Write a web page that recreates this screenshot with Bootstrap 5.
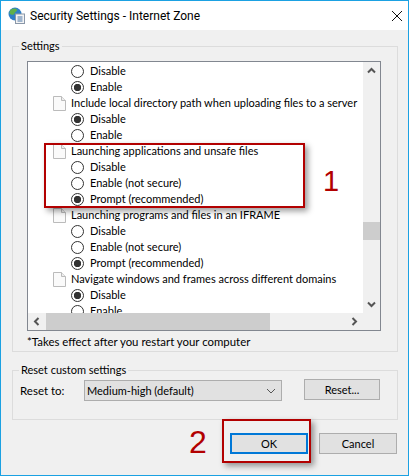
<!DOCTYPE html>
<html lang="en">

<head>
    <meta charset="UTF-8">
    <title>Security Settings - Internet Zone</title>
    <meta name="viewport" content="width=device-width, initial-scale=1">
    <link href="https://cdn.jsdelivr.net/npm/bootstrap@5.3.0/dist/css/bootstrap.min.css" rel="stylesheet">
    <style>
        html, body { height: 100%; }
        body { background: #f0f0f0; color: #000; font: 11px/16px Lato, sans-serif; overflow: hidden; }
        .win { position: relative; width: 409px; height: 476px; border: 1px solid #1ba1e2; background: #f0f0f0; }
        .win-title { height: 29px; background: #fff; padding-left: 7px; gap: 5px; font: 12px/16px Roboto, sans-serif; }
        .win-x { margin-left: auto; margin-right: 5px; }
        .group { border: 1px solid #dcdcdc; margin: 0 10px 0 11px; padding: 0 16px 0 14px; }
        .group legend { float: none; width: auto; font-size: 11px; line-height: 16px; margin: 0 0 0 -8px; padding: 0 2px; }
        .group-settings { margin-top: 8px; height: 314px; }
        .group-reset { margin-top: 10px; height: 58px; padding: 0 7px; }
        .group-reset legend { margin-left: -1px; }
        .list-frame { height: 270px; margin-top: 7px; border: 1px solid #828790; background: #fff; }
        .list-top { height: 251px; }
        .list-view { flex: 1; overflow: hidden; padding-top: 1px; }
        .tree-row { height: 16px; white-space: nowrap; }
        .tree-opt { padding-left: 43px; gap: 6px; }
        .tree-head { padding-left: 25px; gap: 5px; }
        .tree-row .form-check-input { width: 13px; height: 13px; margin: 0; flex: none; border: 1px solid #333; background-color: #fff; background-image: none; }
        .tree-row .form-check-input:checked { background-image: radial-gradient(circle, #333 3.4px, #fff 4px); border-color: #333; }
        .vbar { width: 17px; background: #f0f0f0; }
        .vthumb { height: 18px; background: #cdcdcd; margin-top: 143px; }
        .bar-arrow { height: 17px; width: 17px; flex: none; }
        .hbar { height: 17px; background: #f0f0f0; }
        .hthumb { width: 224px; background: #cdcdcd; margin-left: 1px; }
        .note { margin: 3px 0 0; font-size: 11.4px; }
        .reset-row { padding-top: 2px; }
        .reset-to { width: 64px; font-size: 11.5px; }
        .win-select { width: 198px; height: 21px; flex: none; background-color: #e1e1e1; border: 1px solid #adadad; border-radius: 0; padding: 0 20px 0 2px; font-size: 11px; line-height: 16px; background-image: url("data:image/svg+xml,%3csvg xmlns='http://www.w3.org/2000/svg' viewBox='0 0 10 6'%3e%3cpath d='M1 1l4 4 4-4' fill='none' stroke='%23555'/%3e%3c/svg%3e"); background-position: right 5px center; background-size: 10px 6px; color: #000; }
        .win-btn { background: #e1e1e1; border: 1px solid #adadad; border-radius: 0; color: #000; font-size: 11px; line-height: 16px; padding: 0; height: 21px; }
        .win-btn-reset { width: 76px; margin: -2px 0 0 22px; }
        .win-btn-ok { width: 78px; border: 2px solid #0078d7; }
        .win-btn-cancel { width: 78px; }
        .footer-row { padding: 13px 11px 0 0; gap: 11px; }
        .mark-box { position: absolute; border: 2px solid #b20000; box-shadow: 3px 3px 6px rgba(0, 0, 0, .4); pointer-events: none; }
        .mark-one { left: 43px; top: 142px; width: 261px; height: 65px; }
        .mark-two { left: 221px; top: 418px; width: 89px; height: 44px; }
        .mark-num { position: absolute; color: #b20000; font-family: "Liberation Sans", sans-serif; }
        .num-one { left: 322px; top: 164px; font-size: 29px; line-height: 32px; }
        .num-two { left: 188px; top: 425px; font-size: 32px; line-height: 32px; }
    </style>
</head>

<body>
    <div class="win d-flex flex-column">
        <div class="win-title d-flex align-items-center">
            <svg width="17" height="17" viewBox="0 0 17 17">
                <circle cx="7" cy="7" r="6.5" fill="#2f7fc8"/>
                <path d="M3 2.500c2-1.500 5-1.500 6 0 .5 2-2 2-2.500 4S3 8 1.500 6.500C1.500 5 2 3.500 3 2.500z" fill="#5fb04a"/>
                <rect x="7.500" y="7" width="9" height="9.500" fill="#f4f4f4" stroke="#8a97a8"/>
                <path d="M9.500 10h5M9.500 12h5M9.500 14h5" stroke="#4a76a8"/>
            </svg>
            <span>Security Settings - Internet Zone</span>
            <svg class="win-x" width="12" height="12" viewBox="0 0 12 12"><path d="M1 1l10 10M11 1L1 11" stroke="#111" fill="none"/></svg>
        </div>

        <fieldset class="group group-settings">
            <legend>Settings</legend>
            <div class="list-frame">
                <div class="list-top d-flex">
                    <div class="list-view" id="tree"></div>
                    <div class="vbar d-flex flex-column">
                        <div class="bar-arrow d-flex align-items-center justify-content-center">
                            <svg width="9" height="7" viewBox="0 0 9 7"><path d="M1 5.500l3.500-3.500 3.500 3.500" stroke="#555" stroke-width="2" fill="none"/></svg>
                        </div>
                        <div class="flex-grow-1"><div class="vthumb"></div></div>
                        <div class="bar-arrow d-flex align-items-center justify-content-center">
                            <svg width="9" height="7" viewBox="0 0 9 7"><path d="M1 1.500l3.500 3.500 3.500-3.500" stroke="#555" stroke-width="2" fill="none"/></svg>
                        </div>
                    </div>
                </div>
                <div class="hbar d-flex">
                    <div class="bar-arrow d-flex align-items-center justify-content-center">
                        <svg width="7" height="9" viewBox="0 0 7 9"><path d="M5.500 1L2 4.500 5.500 8" stroke="#555" stroke-width="2" fill="none"/></svg>
                    </div>
                    <div class="hthumb"></div>
                    <div class="flex-grow-1"></div>
                    <div class="bar-arrow d-flex align-items-center justify-content-center">
                        <svg width="7" height="9" viewBox="0 0 7 9"><path d="M1.500 1L5 4.500 1.500 8" stroke="#555" stroke-width="2" fill="none"/></svg>
                    </div>
                    <div class="bar-arrow"></div>
                </div>
            </div>
            <p class="note">*Takes effect after you restart your computer</p>
        </fieldset>

        <fieldset class="group group-reset">
            <legend>Reset custom settings</legend>
            <div class="reset-row d-flex align-items-center">
                <span class="reset-to">Reset to:</span>
                <select class="form-select win-select">
                    <option>Medium-high (default)</option>
                </select>
                <button class="btn win-btn win-btn-reset">Reset...</button>
            </div>
        </fieldset>

        <div class="footer-row d-flex justify-content-end">
            <button class="btn win-btn win-btn-ok">OK</button>
            <button class="btn win-btn win-btn-cancel">Cancel</button>
        </div>

        <div class="mark-box mark-one"></div>
        <div class="mark-box mark-two"></div>
        <div class="mark-num num-one">1</div>
        <div class="mark-num num-two">2</div>
    </div>

    <script>
        const rows = [
            ['o', 'Disable'], ['x', 'Enable'],
            ['h', 'Include local directory path when uploading files to a server'],
            ['x', 'Disable'], ['o', 'Enable'],
            ['h', 'Launching applications and unsafe files'],
            ['o', 'Disable'], ['o', 'Enable (not secure)'], ['x', 'Prompt (recommended)'],
            ['h', 'Launching programs and files in an IFRAME'],
            ['o', 'Disable'], ['o', 'Enable (not secure)'], ['x', 'Prompt (recommended)'],
            ['h', 'Navigate windows and frames across different domains'],
            ['x', 'Disable'], ['o', 'Enable']
        ];
        const page = '<svg width="13" height="15" viewBox="0 0 13 15" class="flex-shrink-0"><path d="M.5.500h8l4 4v10H.5z" fill="#fafafa" stroke="#bbb"/><path d="M8.500.500v4h4" fill="#eee" stroke="#bbb"/></svg>';
        let group = 0;
        document.getElementById('tree').innerHTML = rows.map(([kind, text]) => {
            if (kind === 'h') {
                group++;
                return `<div class="tree-row tree-head d-flex align-items-center">${page}<span>${text}</span></div>`;
            }
            const checked = kind === 'x' ? 'checked' : '';
            return `<div class="tree-row tree-opt d-flex align-items-center"><input class="form-check-input" type="radio" name="g${group}" ${checked}><span>${text}</span></div>`;
        }).join('');
    </script>
    <script src="https://cdn.jsdelivr.net/npm/bootstrap@5.3.0/dist/js/bootstrap.bundle.min.js"></script>
</body>

</html>
